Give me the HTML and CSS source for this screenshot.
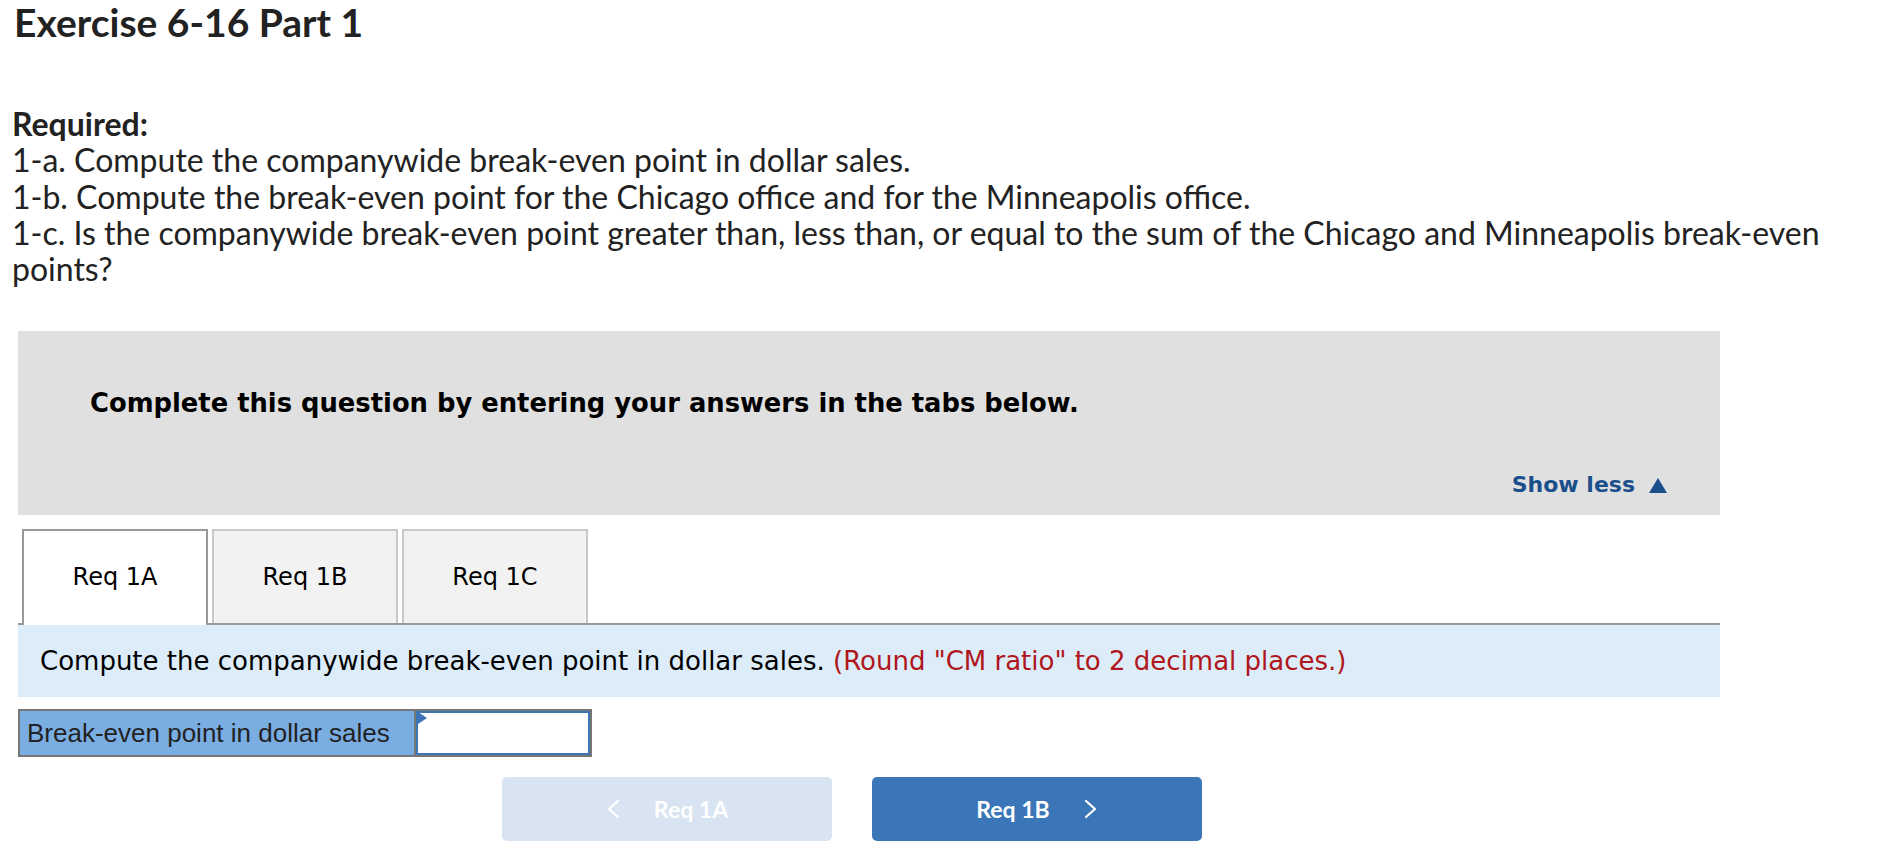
FILE: index.html
```html
<!DOCTYPE html>
<html lang="en">
<head>
<meta charset="utf-8">
<title>Exercise 6-16 Part 1</title>
<link rel="stylesheet" href="styles.css">
</head>
<body>
<div class="page">
  <h1 class="title">Exercise 6-16 Part 1</h1>
  <div class="required">
    <p class="req-head">Required:</p>
    <p>1-a. Compute the companywide break-even point in dollar sales.</p>
    <p>1-b. Compute the break-even point for the Chicago office and for the Minneapolis office.</p>
    <p>1-c. Is the companywide break-even point greater than, less than, or equal to the sum of the Chicago and Minneapolis break-even points?</p>
  </div>

  <section class="panel">
    <div class="instructions">
      <p class="inst-text">Complete this question by entering your answers in the tabs below.</p>
      <div class="show-less">Show less
        <svg class="tri" width="18" height="15" viewBox="0 0 18 15"><polygon points="9,0 18,15 0,15" fill="#1b4f8c"/></svg>
      </div>
    </div>

    <div class="tabs">
      <div class="tab active">Req 1A</div>
      <div class="tab">Req 1B</div>
      <div class="tab">Req 1C</div>
    </div>

    <div class="prompt">Compute the companywide break-even point in dollar sales. <span class="hint">(Round "CM ratio" to 2 decimal places.)</span></div>

    <div class="answer-row">
      <div class="answer-label">Break-even point in dollar sales</div>
      <div class="answer-input"><span class="marker"></span></div>
    </div>

    <div class="nav">
      <button class="nav-btn prev">
        <svg width="14" height="20" viewBox="0 0 14 20"><polyline points="12,2 3,10 12,18" fill="none" stroke="#fff" stroke-width="2.2" stroke-linecap="round" stroke-linejoin="round"/></svg>
        <span>Req 1A</span>
      </button>
      <button class="nav-btn next">
        <span>Req 1B</span>
        <svg width="14" height="20" viewBox="0 0 14 20"><polyline points="2,2 11,10 2,18" fill="none" stroke="#fff" stroke-width="2.2" stroke-linecap="round" stroke-linejoin="round"/></svg>
      </button>
    </div>
  </section>
</div>
</body>
</html>
```

FILE: styles.css
```css
html, body {
  margin: 0;
  padding: 0;
  background: #fff;
}

.page {
  padding-left: 12px;
  color: #222;
  font-family: Lato, "Open Sans", sans-serif;
}

.title {
  margin: 0 0 0 2px;
  font-size: 39px;
  line-height: 44px;
  font-weight: 700;
  color: #222;
}

.required {
  margin-top: 62px;
  font-size: 32px;
  line-height: 36.3px;
  width: 1830px;
}

.required p {
  margin: 0;
}

.required .req-head {
  font-weight: 700;
}

.panel {
  margin-top: 44px;
  margin-left: 6px;
  width: 1702px;
  font-family: "DejaVu Sans", Verdana, sans-serif;
}

.instructions {
  background: #e0e0e0;
  height: 184px;
  box-sizing: border-box;
  padding: 57px 53px 0 72px;
  display: flex;
  flex-direction: column;
}

.inst-text {
  margin: 0;
  font-size: 25.8px;
  line-height: 30px;
  font-weight: 700;
  color: #000;
}

.show-less {
  margin-top: 54px;
  align-self: flex-end;
  display: flex;
  align-items: center;
  gap: 14px;
  font-size: 22px;
  line-height: 26px;
  font-weight: 700;
  color: #1b4f8c;
}

.tabs {
  margin-top: 14px;
  display: flex;
  align-items: flex-start;
  gap: 4px;
  padding-left: 4px;
  border-bottom: 2px solid #999;
}

.tab {
  width: 186px;
  height: 94px;
  box-sizing: border-box;
  border: 2px solid #c8c8c8;
  border-bottom: none;
  background: #f2f2f2;
  display: flex;
  align-items: center;
  justify-content: center;
  font-size: 24px;
  color: #000;
}

.tab.active {
  height: 96px;
  margin-bottom: -2px;
  padding-bottom: 2px;
  background: #fff;
  border-color: #999;
}

.prompt {
  height: 72px;
  box-sizing: border-box;
  padding: 0 22px;
  background: #dcecf8;
  display: flex;
  align-items: center;
  font-size: 26px;
  color: #000;
  white-space: pre;
}

.hint {
  color: #b0161b;
}

.answer-row {
  margin-top: 12px;
  width: 574px;
  height: 48px;
  box-sizing: border-box;
  border: 2px solid #777;
  display: flex;
}

.answer-label {
  width: 396px;
  box-sizing: border-box;
  padding-left: 7px;
  background: #7aade2;
  border-right: 2px solid #777;
  display: flex;
  align-items: center;
  font-family: "Liberation Sans", Arial, sans-serif;
  font-size: 26px;
  color: #222;
}

.answer-input {
  position: relative;
  flex: 1;
  background: #fff;
  border: 2px solid #3c74b5;
}

.marker {
  position: absolute;
  left: 0;
  top: -1px;
  width: 0;
  height: 0;
  border-top: 6px solid transparent;
  border-bottom: 6px solid transparent;
  border-left: 9px solid #3c74b5;
}

.nav {
  margin-top: 20px;
  padding-left: 484px;
  display: flex;
  gap: 40px;
}

.nav-btn {
  width: 330px;
  height: 64px;
  border: none;
  border-radius: 5px;
  display: flex;
  align-items: center;
  justify-content: center;
  gap: 34px;
  font-family: Lato, "Open Sans", sans-serif;
  font-size: 23px;
  font-weight: 700;
  color: #fff;
  padding: 0;
}

.nav-btn.prev {
  background: #d8e4f1;
}

.nav-btn.next {
  background: #3b76b8;
}
```
